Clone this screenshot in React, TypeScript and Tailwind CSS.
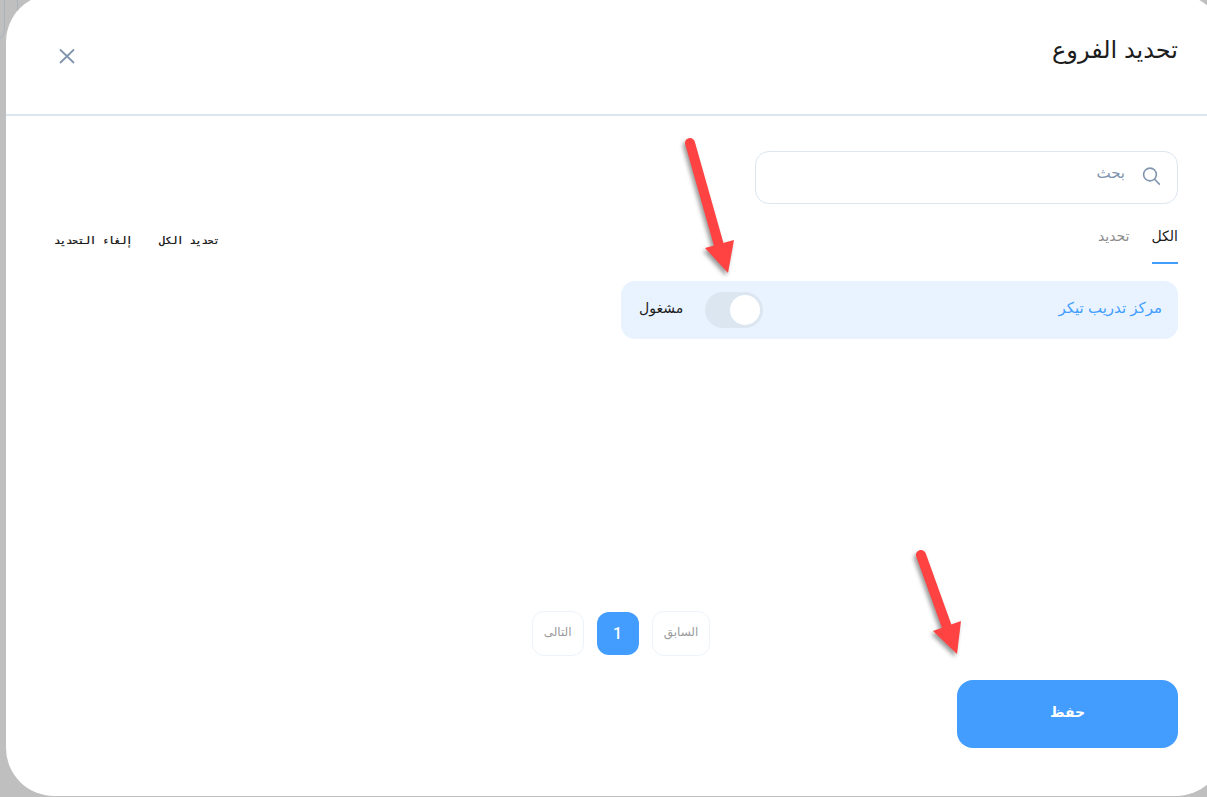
import { useState } from "react";

function Arrow({ className, d, head }: { className: string; d: string; head: string }) {
  return (
    <svg
      aria-hidden="true"
      viewBox="0 0 70 160"
      className={`pointer-events-none absolute h-40 w-[70px] drop-shadow-[-2px_3px_2px_rgba(0,0,0,0.4)] ${className}`}
    >
      <path d={d} stroke="#ff4343" strokeWidth="10" strokeLinecap="round" />
      <path d={head} fill="#ff4343" />
    </svg>
  );
}

function CloseIcon() {
  return (
    <svg viewBox="0 0 16 16" className="size-4" fill="none" stroke="#8094ae" strokeWidth="1.8" aria-hidden="true">
      <path d="M1 1.5 15 15M15 1.5 1 15" />
    </svg>
  );
}

function SearchIcon() {
  return (
    <svg viewBox="0 0 20 20" className="size-5" fill="none" stroke="#8094ae" strokeWidth="1.6" aria-hidden="true">
      <circle cx="9" cy="8.5" r="6.4" />
      <path d="m13.4 13 5.4 5.6" />
    </svg>
  );
}

export default function App() {
  const [tab, setTab] = useState("all");
  const [on, setOn] = useState(true);

  return (
    <div
      dir="rtl"
      className="relative flex min-h-screen flex-col overflow-hidden bg-[#bfbfbf] pb-px pl-1.5 font-['Liberation_Sans','DejaVu_Sans',sans-serif] text-[#1c1c1c]"
    >
      <div className="absolute -top-4 -left-16 h-[59px] w-[69px] rounded-[14px] border border-[#a9b2bb]" />
      <div className="absolute -top-4 left-[17px] h-[59px] w-20 rounded-[14px] border border-[#a9b2bb]" />

      <main role="dialog" aria-labelledby="title" className="relative -mt-1.5 -mr-[17px] flex grow flex-col rounded-[48px] bg-white">
        <header className="flex h-[122px] items-start justify-between border-b-2 border-[#dce6f0] pt-10 pr-[46px] pl-[53px]">
          <h1 id="title" className="text-2xl">تحديد الفروع</h1>
          <button type="button" aria-label="إغلاق" className="cursor-pointer pt-3.5">
            <CloseIcon />
          </button>
        </header>

        <div className="flex grow flex-col pt-[35px] pr-[46px] pb-12 pl-[58px]">
          <label className="flex h-[53px] w-[38%] items-center gap-4 rounded-[14px] border border-[#dce6f0] px-4 pb-1">
            <SearchIcon />
            <input
              type="text"
              aria-label="بحث"
              placeholder="بحث"
              className="min-w-0 grow bg-transparent pb-1 text-[15px] outline-none placeholder:text-[#8094ae]"
            />
          </label>

          <div className="mt-4 flex h-11 items-start justify-between">
            <div role="tablist" className="flex h-full gap-[22px] text-sm">
              <button
                type="button"
                role="tab"
                aria-selected={tab === "all"}
                onClick={() => setTab("all")}
                className="flex cursor-pointer items-start border-b-2 border-transparent pt-1.5 text-[#8c8c8c] aria-selected:border-[#429dff] aria-selected:text-[#1c1c1c]"
              >
                الكل
              </button>
              <button
                type="button"
                role="tab"
                aria-selected={tab === "selected"}
                onClick={() => setTab("selected")}
                className="flex cursor-pointer items-start border-b-2 border-transparent pt-1.5 text-[#8c8c8c] aria-selected:border-[#429dff] aria-selected:text-[#1c1c1c]"
              >
                تحديد
              </button>
            </div>
            <div className="-ml-2.5 flex gap-[27px] pt-[13px] font-['DejaVu_Sans_Mono',monospace] text-[10px] leading-4 font-bold">
              <button type="button" className="cursor-pointer">تحديد الكل</button>
              <button type="button" className="cursor-pointer">إلغاء التحديد</button>
            </div>
          </div>

          <section className="mt-[17px] flex h-[58px] w-1/2 items-center justify-between rounded-[14px] bg-[#e8f3ff] pr-4 pl-[18px]">
            <span className="pb-1 text-[15px] text-[#429dff]">مركز تدريب تيكر</span>
            <label className="flex items-center gap-[22px]">
              <input
                type="checkbox"
                role="switch"
                checked={on}
                onChange={() => setOn(!on)}
                className="h-9 w-[58px] cursor-pointer appearance-none rounded-full bg-[#dce6f0] p-[3px] pl-0.5 before:block before:size-[30px] before:rounded-full before:bg-white checked:before:mr-0 not-checked:before:mr-6"
              />
              <span className="pb-1 text-sm">مشغول</span>
            </label>
          </section>

          <nav className="mt-auto flex items-center justify-center gap-[13px] text-xs text-[#9b9b9b]">
            <button type="button" className="h-[45px] cursor-pointer rounded-xl border border-[#edf3f9] px-[11px] pb-1">السابق</button>
            <button type="button" aria-current="page" className="h-[43px] w-[42px] cursor-pointer rounded-xl bg-[#429dff] font-['Roboto',sans-serif] text-base font-medium text-white">
              1
            </button>
            <button type="button" className="h-[45px] cursor-pointer rounded-xl border border-[#edf3f9] px-[11px] pb-1">التالى</button>
          </nav>

          <button type="button" className="mt-6 h-[68px] w-[221px] cursor-pointer rounded-2xl bg-[#429dff] pb-1 text-sm font-bold text-white">
            حفظ
          </button>
        </div>
      </main>

      <Arrow className="top-[133px] left-[670px]" d="M20 10 50 116" head="M35 115 64 107 58 140Z" />
      <Arrow className="top-[544px] left-[901px]" d="M20 11 47 86" head="M32 87 60 77 56 110Z" />
    </div>
  );
}
